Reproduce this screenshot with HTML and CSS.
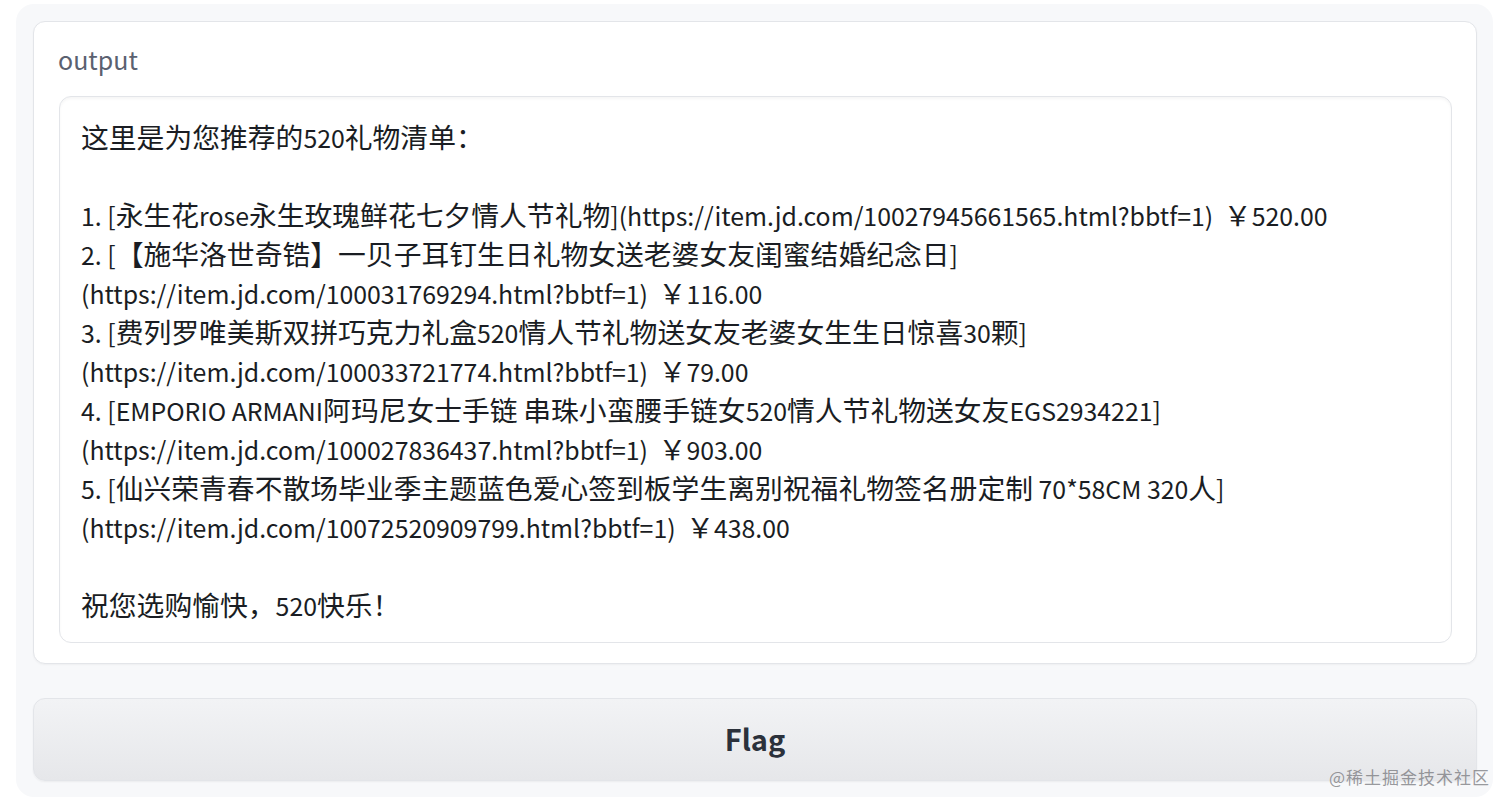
FILE: index.html
```html
<!DOCTYPE html>
<html lang="zh-CN">
<head>
<meta charset="utf-8">
<title>output</title>
<link rel="stylesheet" href="styles.css">
</head>
<body>
<div class="app">
  <div class="card">
    <div class="label">output</div>
    <div class="textbox">
      <div class="line"><span class="h">这里是为您推荐的</span>520<span class="h">礼物清单：</span></div>
      <div class="line"></div>
      <div class="line">1. [<span class="h">永生花</span>rose<span class="h">永生玫瑰鲜花七夕情人节礼物</span>](https://item.jd.com/10027945661565.html?bbtf=1) <span class="h yen">￥</span>520.00</div>
      <div class="line">2. [<span class="h">【施华洛世奇锆】一贝子耳钉生日礼物女送老婆女友闺蜜结婚纪念日</span>]</div>
      <div class="line">(https://item.jd.com/100031769294.html?bbtf=1) <span class="h yen">￥</span>116.00</div>
      <div class="line">3. [<span class="h">费列罗唯美斯双拼巧克力礼盒</span>520<span class="h">情人节礼物送女友老婆女生生日惊喜</span>30<span class="h">颗</span>]</div>
      <div class="line">(https://item.jd.com/100033721774.html?bbtf=1) <span class="h yen">￥</span>79.00</div>
      <div class="line">4. [EMPORIO ARMANI<span class="h">阿玛尼女士手链</span> <span class="h">串珠小蛮腰手链女</span>520<span class="h">情人节礼物送女友</span>EGS2934221]</div>
      <div class="line">(https://item.jd.com/100027836437.html?bbtf=1) <span class="h yen">￥</span>903.00</div>
      <div class="line">5. [<span class="h">仙兴荣青春不散场毕业季主题蓝色爱心签到板学生离别祝福礼物签名册定制</span> 70*58CM 320<span class="h">人</span>]</div>
      <div class="line">(https://item.jd.com/10072520909799.html?bbtf=1) <span class="h yen">￥</span>438.00</div>
      <div class="line"></div>
      <div class="line"><span class="h">祝您选购愉快，</span>520<span class="h">快乐！</span></div>
    </div>
  </div>
  <button class="flag">Flag</button>
  <div class="watermark">@稀土掘金技术社区</div>
</div>
</body>
</html>
```

FILE: styles.css
```css
html, body {
  margin: 0;
  padding: 0;
  background: #ffffff;
}

body {
  font-family: "Noto Sans CJK SC", "Noto Sans", sans-serif;
  color: #1f2937;
}

.app {
  position: relative;
  margin: 4px 19px 13px 16px;
  padding: 17px 16px 16px 17px;
  background: #f7f8fa;
  border-radius: 18px;
  display: flex;
  flex-direction: column;
  gap: 34px;
}

.card {
  background: #ffffff;
  border: 1px solid #e3e5e9;
  border-radius: 12px;
  box-shadow: 0 1px 2px rgba(0, 0, 0, 0.04);
  padding: 22px 24px 20px 25px;
}

.label {
  font-size: 25px;
  line-height: 30px;
  color: #5b6170;
  margin-left: -1px;
  margin-bottom: 22px;
}

.textbox {
  border: 1px solid #e3e5e9;
  border-radius: 12px;
  box-shadow: inset 0 2px 3px rgba(0, 0, 0, 0.04);
  padding: 20px 20px 18px 21px;
  font-size: 24.85px;
  line-height: 39px;
  color: #1a1d23;
  text-spacing-trim: space-all;
}

.line {
  white-space: nowrap;
  height: 39px;
}

.h {
  font-size: 27.8px;
}

.yen {
  margin-left: 5px;
}

.flag {
  display: block;
  width: 100%;
  height: 83px;
  border: 1px solid #e3e5e9;
  border-radius: 12px;
  background: linear-gradient(to bottom, #f2f3f5, #e6e7ea);
  font-family: "Noto Sans CJK SC", "Noto Sans", sans-serif;
  font-weight: 700;
  font-size: 29px;
  color: #2b313b;
  padding: 0 0 3px 0;
  box-shadow: 0 1px 2px rgba(0, 0, 0, 0.05);
}

.watermark {
  position: absolute;
  right: 3px;
  bottom: 10px;
  font-size: 17px;
  line-height: 20px;
  color: rgba(110, 110, 115, 0.7);
  letter-spacing: 1px;
}
```
